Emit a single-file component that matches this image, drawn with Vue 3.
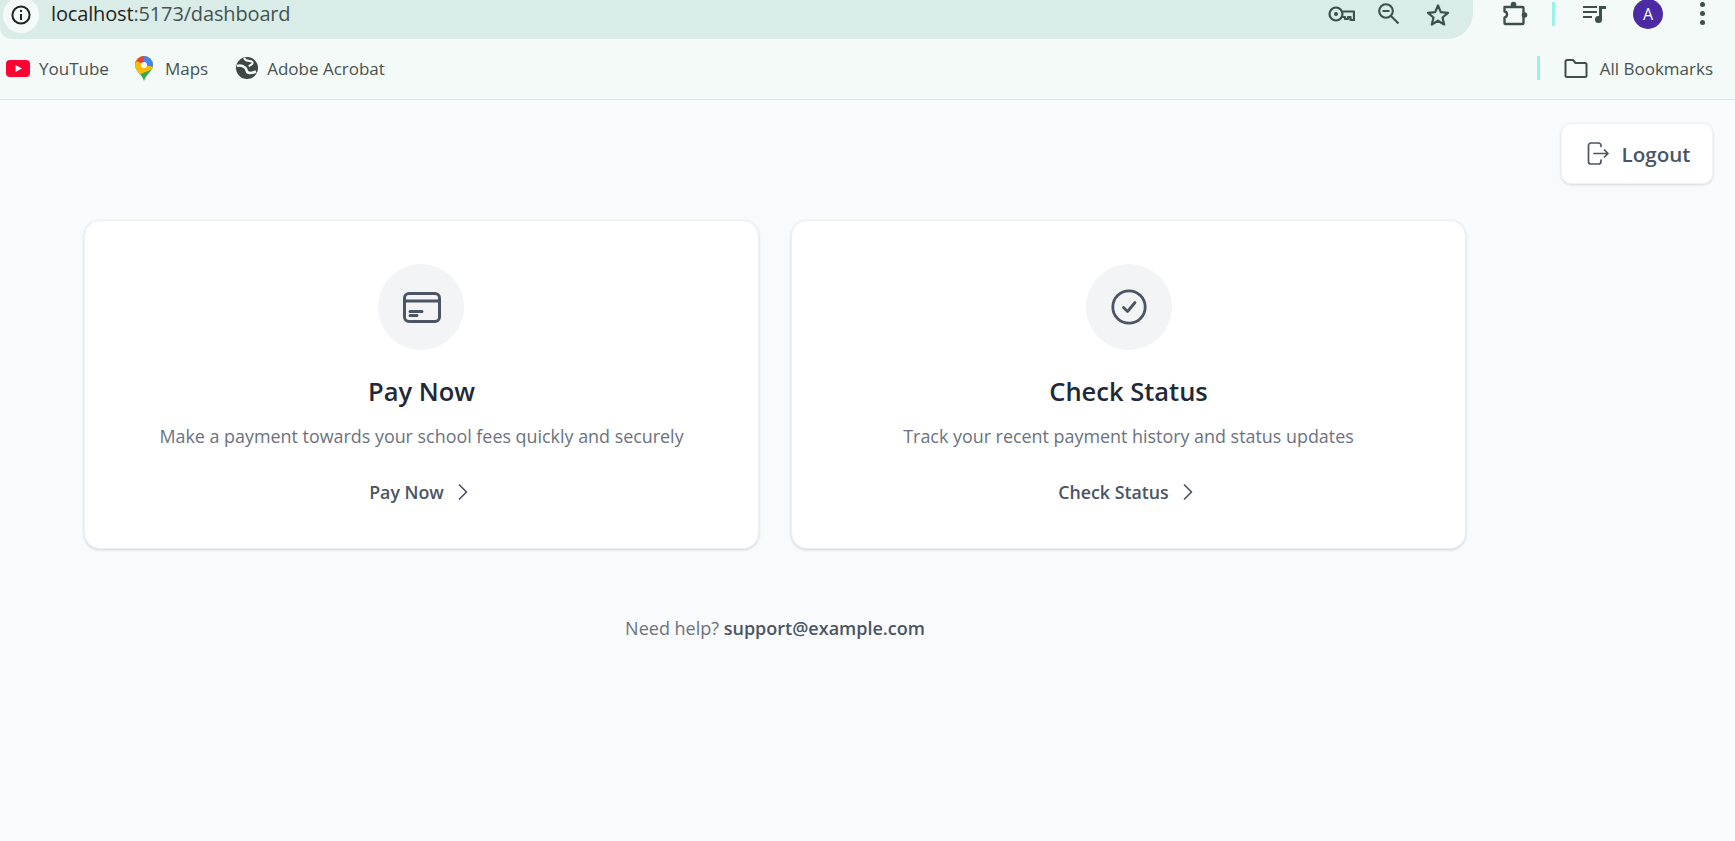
<script setup>
const bookmarks = [
  { name: "YouTube", icon: "yt" },
  { name: "Maps", icon: "maps" },
  { name: "Adobe Acrobat", icon: "globe" },
];

const cards = [
  {
    title: "Pay Now",
    text: "Make a payment towards your school fees quickly and securely",
    icon: "card",
  },
  {
    title: "Check Status",
    text: "Track your recent payment history and status updates",
    icon: "check",
  },
];
</script>

<template>
  <div class="page">
    <header class="chrome">
      <div class="top-row">
        <div class="omnibox">
          <span class="info">
            <svg width="22" height="22" viewBox="0 0 22 22" fill="none" stroke="#1f2422" stroke-width="2">
              <circle cx="11" cy="11" r="8.6" />
              <path d="M11 10v6M11 6v2" />
            </svg>
          </span>
          <span class="url">localhost<span class="url-rest">:5173/dashboard</span></span>
          <div class="omni-icons">
            <svg class="key" width="27" height="16" viewBox="0 0 27 16" fill="none" stroke="#3f4f4b" stroke-width="2.2" stroke-linejoin="round">
              <circle cx="8" cy="8" r="6.500" />
              <circle cx="8" cy="8" r="2" fill="#3f4f4b" stroke="none" />
              <path d="M14.500 5.500H26v8.500h-3.500V11H20v2h-3v-2h-2.500" />
            </svg>
            <svg class="zoom" width="22" height="22" viewBox="0 0 22 22" fill="none" stroke="#3f4f4b" stroke-width="2.1">
              <circle cx="8" cy="8" r="6.800" />
              <path d="M4.500 8h7M13 13l7.500 7.500" />
            </svg>
            <svg class="star" width="24" height="23" viewBox="0 0 24 23" fill="none" stroke="#3f4f4b" stroke-width="2.2" stroke-linejoin="round">
              <path d="M12 2.500l2.800 6.700 7.200.6-5.500 4.700 1.700 7L12 17.700l-6.200 3.800 1.700-7L2 9.800l7.200-.6z" />
            </svg>
          </div>
        </div>
        <div class="toolbar">
          <svg class="puzzle" width="26" height="25" viewBox="0 0 26 25">
            <path d="M2.500 6h18a1 1 0 0 1 1 1v15a1 1 0 0 1-1 1h-17a1 1 0 0 1-1-1v-5.500a3 3 0 0 0 2.500-3 3 3 0 0 0-2.500-3z" fill="none" stroke="#3f4f4b" stroke-width="2.400" stroke-linejoin="round" />
            <circle cx="11.500" cy="3.500" r="2.800" fill="#3f4f4b" />
            <circle cx="22.500" cy="14" r="2.800" fill="#3f4f4b" />
          </svg>
          <span class="teal-bar"></span>
          <svg class="queue" width="24" height="20" viewBox="0 0 24 20" fill="#3f4f4b">
            <path d="M0 2h14v2H0zM0 7h14v2H0zM0 12h9v2H0z" />
            <path d="M16 2h7v3h-4v10.500a3.500 3.500 0 1 1-3-3.400z" />
          </svg>
          <span class="avatar">A</span>
          <span class="dots"><i></i><i></i><i></i></span>
        </div>
      </div>
      <nav class="bookmarks">
        <a v-for="b in bookmarks" :key="b.name" class="bookmark">
          <svg v-if="b.icon === 'yt'" width="24" height="17" viewBox="0 0 24 17">
            <rect width="24" height="17" rx="4" fill="#ff0033" />
            <path d="M9.500 5l6.500 3.500L9.500 12z" fill="#fff" />
          </svg>
          <svg v-else-if="b.icon === 'maps'" width="18" height="25" viewBox="0 0 18 25">
            <defs>
              <clipPath id="pin">
                <path d="M9 0a9 9 0 0 1 9 9c0 2.500-1 4.300-2.500 6.300C13 18.500 10.300 20.500 9 25c-1.300-4.500-4-6.500-6.500-9.700C1 13.300 0 11.500 0 9a9 9 0 0 1 9-9z" />
              </clipPath>
            </defs>
            <g clip-path="url(#pin)">
              <rect width="18" height="25" fill="#34a853" />
              <path d="M0 0h18v13L3 19 0 15z" fill="#fbbc04" />
              <path d="M0 0h11L9 9 2 5 0 7z" fill="#ea4335" />
              <path d="M9 -1h10v12L9 9z" fill="#4285f4" />
            </g>
            <circle cx="9" cy="9" r="3" fill="#fff" />
          </svg>
          <svg v-else width="22" height="22" viewBox="0 0 22 22">
            <circle cx="11" cy="11" r="11" fill="#3f4745" />
            <path d="M1 9c3-1 6 0 8 1.500s1 4 3 5 5 .5 8-1" fill="none" stroke="#f4faf8" stroke-width="2.600" />
            <path d="M8 1c1 2 3 3 5.500 3s3.500 1 3 2.500-2.500 1-3.500 3" fill="none" stroke="#f4faf8" stroke-width="2" />
          </svg>
          <span>{{ b.name }}</span>
        </a>
        <span class="teal-bar bm-bar"></span>
        <a class="bookmark all">
          <svg width="24" height="19" viewBox="0 0 24 19" fill="none" stroke="#3f4f4b" stroke-width="2" stroke-linejoin="round">
            <path d="M1.500 2.500a1.500 1.500 0 0 1 1.500-1.500h6l2.500 3H21a1.500 1.500 0 0 1 1.500 1.500V16.500A1.500 1.500 0 0 1 21 18H3a1.500 1.500 0 0 1-1.500-1.500z" />
          </svg>
          <span>All Bookmarks</span>
        </a>
      </nav>
    </header>

    <main class="content">
      <div class="actions">
        <button class="logout">
          <svg width="22" height="23" viewBox="0 0 22 23" fill="none" stroke="#4b5563" stroke-width="1.7" stroke-linecap="round" stroke-linejoin="round">
            <path d="M14 4.500V3.500A2.500 2.500 0 0 0 11.500 1H4A2.500 2.500 0 0 0 1.500 3.500v16A2.500 2.500 0 0 0 4 22h7.500a2.500 2.500 0 0 0 2.500-2.500V18" />
            <path d="M7 11.500h14M17.500 8l3.500 3.500-3.500 3.500" />
          </svg>
          <span>Logout</span>
        </button>
      </div>

      <section class="cards">
        <article v-for="c in cards" :key="c.title" class="card">
          <div class="icon-circle">
            <svg v-if="c.icon === 'card'" class="card-icon" width="38" height="31" viewBox="0 0 38 31" fill="none" stroke="#4b5563" stroke-width="3" stroke-linecap="round">
              <rect x="1.500" y="1.500" width="35" height="28" rx="4.500" />
              <path d="M1.500 9h35" stroke-width="3" />
              <path d="M7 19.500h12M7 23.500h7" />
            </svg>
            <svg v-else width="36" height="36" viewBox="0 0 36 36" fill="none" stroke="#4b5563" stroke-width="2.800" stroke-linecap="round" stroke-linejoin="round">
              <circle cx="18" cy="18" r="16.200" />
              <path d="M12.500 18.500l4 4 7.500-9" />
            </svg>
          </div>
          <h2>{{ c.title }}</h2>
          <p>{{ c.text }}</p>
          <a class="card-link">
            <span>{{ c.title }}</span>
            <svg width="10" height="16" viewBox="0 0 10 16" fill="none" stroke="#4b5563" stroke-width="1.700" stroke-linecap="round" stroke-linejoin="round">
              <path d="M1.500 1l7 7-7 7" />
            </svg>
          </a>
        </article>
      </section>

      <p class="help">Need help? <strong>support@example.com</strong></p>
    </main>
  </div>
</template>

<style>
html,
body {
  margin: 0;
  background: #f9fafb;
}
</style>

<style scoped>
.page {
  min-height: 841px;
  overflow: hidden;
  background: #f9fafb;
  font-family: "Open Sans", "Noto Sans", sans-serif;
}

.chrome {
  height: 99px;
  background: #f4faf8;
  border-bottom: 1px solid #dfe3e3;
}

.top-row {
  display: flex;
  height: 39px;
  align-items: center;
}

.omnibox {
  display: flex;
  align-items: center;
  width: 1473px;
  height: 39px;
  flex-shrink: 0;
  background: #daece7;
  border-radius: 0 0 26px 12px;
}

.info {
  display: flex;
  align-items: center;
  justify-content: center;
  width: 36px;
  height: 36px;
  margin: -10px 0 0 3px;
  background: #f4faf8;
  border-radius: 50%;
}

.url {
  margin: -12px 0 0 12px;
  font-size: 20px;
  letter-spacing: -0.15px;
  color: #1f2422;
}

.url-rest {
  color: #46524f;
}

.omni-icons {
  display: flex;
  align-items: center;
  margin: -11px 0 0 auto;
  padding-right: 23px;
}

.zoom {
  margin-left: 23px;
}

.star {
  margin-left: 26px;
}

.toolbar {
  display: flex;
  align-items: center;
  flex: 1;
  margin-top: -12px;
}

.puzzle {
  margin-left: 29px;
}

.teal-bar {
  display: block;
  width: 3px;
  height: 24px;
  background: #9af2e6;
}

.toolbar .teal-bar {
  margin-left: 24px;
}

.queue {
  margin-left: 28px;
}

.avatar {
  display: flex;
  align-items: center;
  justify-content: center;
  width: 30px;
  height: 30px;
  margin-left: 26px;
  border-radius: 50%;
  background: #4b2aa3;
  color: #fff;
  font-size: 16px;
}

.dots {
  display: flex;
  flex-direction: column;
  gap: 4px;
  margin-left: 37px;
}

.dots i {
  display: block;
  width: 5px;
  height: 5px;
  border-radius: 50%;
  background: #3f4f4b;
}

.bookmarks {
  display: flex;
  align-items: center;
  height: 58px;
  padding: 0 0 2px 6px;
  font-size: 17px;
  color: #46524f;
}

.bookmark {
  display: flex;
  align-items: center;
  gap: 9px;
  margin-right: 26px;
}

.bookmark:nth-child(2) {
  gap: 12px;
  margin-right: 28px;
}

.bm-bar {
  margin-left: auto;
}

.bookmark.all {
  gap: 12px;
  margin: 0 22px 0 24px;
}

.actions {
  display: flex;
  justify-content: flex-end;
  padding: 23px 22px 0 0;
}

.logout {
  display: flex;
  align-items: center;
  justify-content: center;
  gap: 13px;
  box-sizing: border-box;
  width: 152px;
  height: 61px;
  padding: 0 0 0 3px;
  background: #fff;
  border: 1px solid #f1f2f4;
  border-radius: 10px;
  box-shadow: 0 1px 3px rgba(0, 0, 0, 0.14);
  font-family: inherit;
  font-size: 20.600px;
  font-weight: 600;
  color: #4b5563;
}

.cards {
  display: grid;
  grid-template-columns: 675px 675px;
  gap: 32px;
  margin: 36px 0 0 84px;
}

.card {
  display: flex;
  flex-direction: column;
  align-items: center;
  box-sizing: border-box;
  height: 329px;
  padding-top: 43px;
  background: #fff;
  border: 1px solid #eef0f2;
  border-radius: 16px;
  box-shadow: 0 1px 3px rgba(0, 0, 0, 0.16);
}

.icon-circle {
  display: flex;
  align-items: center;
  justify-content: center;
  width: 86px;
  height: 86px;
  border-radius: 50%;
  background: #f3f4f6;
}

.card:first-child .icon-circle {
  margin-left: -1px;
}

.card-icon {
  margin-left: 2px;
}

.card h2 {
  margin: 24px 0 0;
  font-size: 25.500px;
  line-height: 34px;
  font-weight: 600;
  color: #1f2937;
}

.card p {
  margin: 14px 0 0;
  font-size: 17.900px;
  line-height: 28px;
  color: #6b7280;
}

.card-link {
  display: flex;
  align-items: center;
  gap: 14px;
  margin-top: 28px;
  padding-right: 6px;
  font-size: 17.800px;
  line-height: 28px;
  font-weight: 600;
  color: #4b5563;
}

.help {
  width: 1382px;
  margin: 65px 0 0 84px;
  text-align: center;
  font-size: 18px;
  line-height: 28px;
  color: #6b7280;
}

.help strong {
  font-weight: 600;
  color: #4b5563;
}
</style>
